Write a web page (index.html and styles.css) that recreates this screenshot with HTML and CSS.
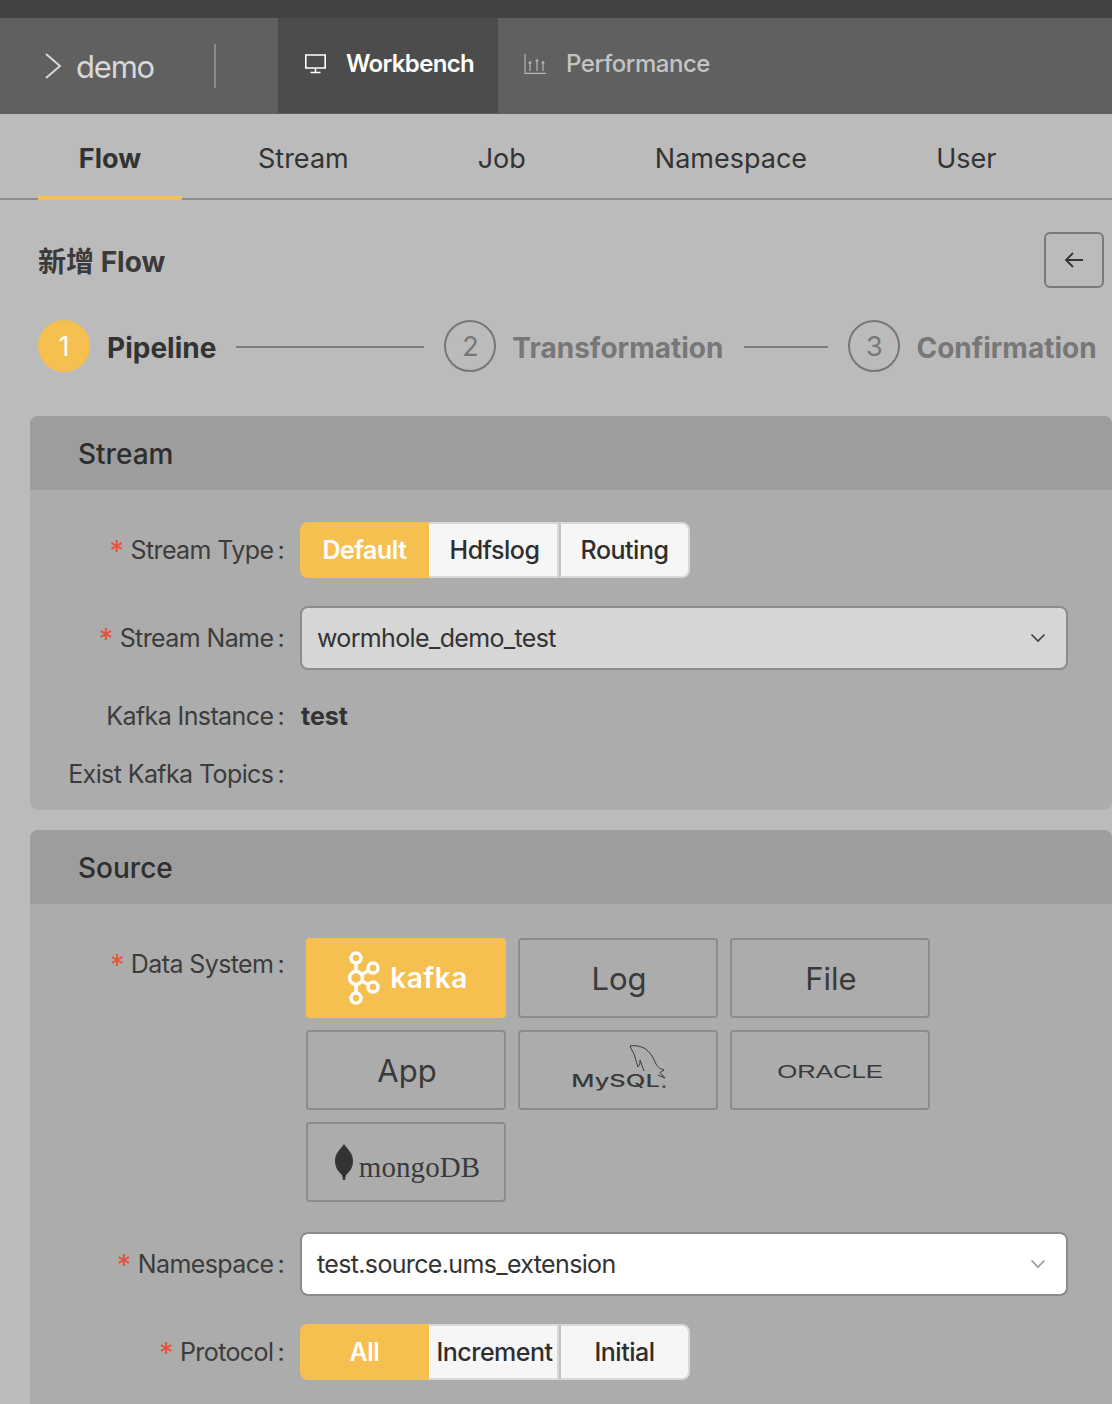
FILE: index.html
```html
<!DOCTYPE html>
<html lang="en">
<head>
  <meta charset="UTF-8" />
  <meta name="viewport" content="width=device-width, initial-scale=1.0" />
  <title>Wormhole</title>
  <link rel="stylesheet" href="styles.css">
</head>
<body>
  <header class="topbar">
    <div class="project">
      <svg class="project-arrow" width="18" height="26" viewBox="0 0 18 26"><path d="M2 1l14 12L2 25" fill="none" stroke="#d8d8d8" stroke-width="2"/></svg>
      <span class="project-name">demo</span>
    </div>
    <a class="nav-item nav-active">
      <svg width="23" height="20" viewBox="0 0 23 20"><path d="M1.800 1h19.400v13H1.800zM11.500 14v4M6.500 18.500h10" fill="none" stroke="#fff" stroke-width="1.600"/></svg>
      <span>Workbench</span>
    </a>
    <a class="nav-item">
      <svg width="23" height="20" viewBox="0 0 23 20"><path d="M1 0v19.300h21M6 17V8M4.700 9.500L6 7.500l1.300 2M13 17V6M11.700 7.500L13 5.500l1.300 2M19 17V8M17.700 9.500L19 7.500l1.300 2" fill="none" stroke="#b4b4b4" stroke-width="1.200"/></svg>
      <span>Performance</span>
    </a>
  </header>

  <nav class="tabs">
    <a class="tab tab-active">Flow</a>
    <a class="tab">Stream</a>
    <a class="tab">Job</a>
    <a class="tab">Namespace</a>
    <a class="tab">User</a>
  </nav>

  <div class="title-row">
    <h2>新增 Flow</h2>
    <button class="back-btn">
      <svg width="20" height="16" viewBox="0 0 20 16"><path d="M9 1L2 8l7 7M2 8h17" fill="none" stroke="#333" stroke-width="1.800"/></svg>
    </button>
  </div>

  <div class="steps">
    <div class="step step-active"><span class="step-num">1</span><span class="step-name">Pipeline</span></div>
    <div class="step-line step-line-long"></div>
    <div class="step"><span class="step-num">2</span><span class="step-name">Transformation</span></div>
    <div class="step-line"></div>
    <div class="step"><span class="step-num">3</span><span class="step-name">Confirmation</span></div>
  </div>

  <section class="panel">
    <h3 class="panel-head">Stream</h3>
    <div class="panel-body">
      <div class="row">
        <label class="req">Stream Type</label>
        <div class="radio-group">
          <span class="radio radio-on">Default</span>
          <span class="radio">Hdfslog</span>
          <span class="radio">Routing</span>
        </div>
      </div>
      <div class="row row-tight">
        <label class="req">Stream Name</label>
        <div class="select select-disabled">
          <span>wormhole_demo_test</span>
          <svg width="16" height="10" viewBox="0 0 16 10"><path d="M1.500 1.500L8 8l6.500-6.500" fill="none" stroke="#444" stroke-width="1.700"/></svg>
        </div>
      </div>
      <div class="row-text">
        <label>Kafka Instance</label>
        <strong>test</strong>
      </div>
      <div class="row-text">
        <label>Exist Kafka Topics</label>
      </div>
    </div>
  </section>

  <section class="panel panel-source">
    <h3 class="panel-head">Source</h3>
    <div class="panel-body">
      <div class="row row-systems">
        <label class="req">Data System</label>
        <div class="systems">
          <div class="system system-on">
            <svg width="36" height="56" viewBox="0 0 36 56">
              <path d="M12 8v40M12 28L29 18M12 28l17 9" fill="none" stroke="#fff" stroke-width="3.500"/>
              <circle cx="12" cy="8" r="5" fill="#f5c04f" stroke="#fff" stroke-width="3.500"/>
              <circle cx="12" cy="28" r="6.500" fill="#f5c04f" stroke="#fff" stroke-width="3.500"/>
              <circle cx="12" cy="48" r="5" fill="#f5c04f" stroke="#fff" stroke-width="3.500"/>
              <circle cx="29" cy="18" r="5" fill="#f5c04f" stroke="#fff" stroke-width="3.500"/>
              <circle cx="29" cy="37" r="5" fill="#f5c04f" stroke="#fff" stroke-width="3.500"/>
            </svg>
            <span class="logo-kafka">kafka</span>
          </div>
          <div class="system system-word">Log</div>
          <div class="system system-word">File</div>
          <div class="system system-word">App</div>
          <div class="system system-mysql">
            <span class="logo-mysql">MySQL</span>
            <svg class="dolphin" width="38" height="46" viewBox="0 0 38 46"><path d="M2 3C6 2 12 3 16 5c6 4 9 9 12 16 2 4 5 5 8 6l-4 2.500 5 5.500-7-3M2 3c1 4 4 6 5 11 1 4 2 7 3 10 2-2 2-5 2-7 1 4 3 7 4 11" fill="none" stroke="#3a3a3a" stroke-width="1"/><circle cx="36" cy="43.700" r="1.600" fill="#555"/></svg>
          </div>
          <div class="system"><span class="logo-oracle">ORACLE</span></div>
          <div class="system">
            <svg class="leaf" width="20" height="36" viewBox="0 0 20 36"><path d="M10 0c2 4 9 8 9 17 0 8-5 12-7 14l-1 5H9l-1-5C6 29 1 25 1 17 1 8 8 4 10 0z" fill="#333"/></svg>
            <span class="logo-mongo">mongoDB</span>
          </div>
        </div>
      </div>
      <div class="row">
        <label class="req">Namespace</label>
        <div class="select">
          <span>test.source.ums_extension</span>
          <svg width="16" height="10" viewBox="0 0 16 10"><path d="M1.500 1.500L8 8l6.500-6.500" fill="none" stroke="#999" stroke-width="1.700"/></svg>
        </div>
      </div>
      <div class="row">
        <label class="req">Protocol</label>
        <div class="radio-group">
          <span class="radio radio-on">All</span>
          <span class="radio">Increment</span>
          <span class="radio">Initial</span>
        </div>
      </div>
    </div>
  </section>
</body>
</html>
```

FILE: styles.css
```css
html, body {
  height: 1404px;
  overflow: hidden;
}
body {
  margin: 0;
  font-family: Inter, "Noto Sans CJK SC", sans-serif;
  background-color: #bbbbbb;
  color: #333;
}

/* top bar */
.topbar {
  display: flex;
  height: 95px;
  border-top: 18px solid #434343;
  border-bottom: 1px solid #5f5f5f;
  background-color: #606060;
}
.project {
  flex: none;
  display: flex;
  align-items: center;
  width: 172px;
  height: 44px;
  box-sizing: border-box;
  margin: 26px 62px 0 44px;
  border-right: 2px solid #8c8c8c;
}
.project-arrow {
  flex: none;
  margin-right: 14px;
}
.project-name {
  font-size: 31px;
  letter-spacing: -1.200px;
  color: #d8d8d8;
}
.nav-item {
  display: flex;
  align-items: center;
  gap: 19px;
  height: 95px;
  padding: 0 26px 4px;
  box-sizing: border-box;
  font-size: 24px;
  font-weight: 500;
  letter-spacing: -0.450px;
  color: #c4c4c4;
}
.nav-item svg {
  flex: none;
}
.nav-active {
  width: 220px;
  background-color: #4c4c4c;
  color: #fff;
  font-weight: 600;
  letter-spacing: -0.650px;
}

/* tabs */
.tabs {
  display: flex;
  height: 86px;
  padding-left: 38px;
  border-bottom: 2px solid #8d8d8d;
  box-sizing: border-box;
}
.tab {
  display: flex;
  align-items: center;
  justify-content: center;
  height: 86px;
  box-sizing: border-box;
  padding: 2px 40px 0;
  margin-right: 49px;
  font-size: 27px;
  color: #333;
}
.tab-active {
  width: 144px;
  margin-right: 36px;
  padding: 6px 0 0;
  font-weight: 700;
  border-bottom: 4px solid #f5c04f;
}

/* title */
.title-row {
  display: flex;
  align-items: center;
  justify-content: space-between;
  padding: 32px 8px 0 38px;
}
.title-row h2 {
  margin: 0;
  font-size: 28px;
  font-weight: 700;
  color: #3a3a3a;
}
.back-btn {
  display: flex;
  align-items: center;
  justify-content: center;
  width: 60px;
  height: 56px;
  padding: 0;
  border: 2px solid #7a7a7a;
  border-radius: 6px;
  background: none;
}

/* steps */
.steps {
  display: flex;
  align-items: center;
  padding: 32px 0 0 38px;
}
.step {
  display: flex;
  align-items: center;
  gap: 16px;
  font-size: 28px;
  font-weight: 700;
  color: #777;
}
.step-name {
  padding: 3px 1px 0 0;
}
.step-num {
  display: flex;
  align-items: center;
  justify-content: center;
  width: 52px;
  height: 52px;
  box-sizing: border-box;
  border: 2px solid #777;
  border-radius: 50%;
  font-weight: 400;
  font-size: 27px;
}
.step-active {
  gap: 17px;
  color: #333;
}
.step-active .step-name {
  padding-right: 0;
}
.step-active .step-num {
  border: none;
  background-color: #f5c04f;
  color: #fff;
}
.step-line {
  width: 84px;
  height: 2px;
  margin: 2px 20px 0;
  background-color: #7d7d7d;
}
.step-line-long {
  width: 188px;
}

/* panels */
.panel {
  margin: 44px 0 0 30px;
  border-radius: 8px;
  background-color: #acacac;
  height: 394px;
}
.panel-source {
  margin-top: 20px;
  height: 600px;
}
.panel-source .panel-body {
  padding-top: 34px;
}
.panel-head {
  margin: 0;
  height: 74px;
  padding-left: 48px;
  line-height: 76px;
  font-size: 28px;
  font-weight: 500;
  border-radius: 8px 8px 0 0;
  background-color: #9d9d9d;
  color: #2e2e2e;
}
.panel-body {
  padding-top: 32px;
}

/* form rows */
.row {
  display: flex;
  margin-bottom: 28px;
}
.row-tight {
  margin-bottom: 17px;
}
.row-systems {
  margin-bottom: 30px;
}
.row label, .row-text label {
  flex: none;
  display: flex;
  justify-content: flex-end;
  align-items: center;
  width: 255px;
  box-sizing: border-box;
  padding-right: 1px;
  margin-right: 16px;
  font-size: 25px;
  letter-spacing: -0.600px;
  color: #3c3c3c;
}
.row label::after, .row-text label::after {
  content: ":";
  margin-left: 4px;
}
.req::before {
  content: "*";
  margin-right: 7px;
  color: #e5533f;
  font-size: 29px;
  line-height: 1;
}
.row-systems label {
  height: 52px;
}
.row-text {
  display: flex;
  align-items: center;
  height: 58px;
}
.row-text strong {
  font-size: 25px;
  font-weight: 700;
  color: #333;
}

.radio-group {
  display: flex;
  height: 56px;
  margin-left: -1px;
}
.radio {
  display: flex;
  align-items: center;
  justify-content: center;
  width: 130px;
  box-sizing: border-box;
  padding-left: 3px;
  background-color: #f6f6f6;
  border: 2px solid #d8d8d8;
  border-left: 0;
  font-size: 25px;
  font-weight: 500;
  letter-spacing: -0.500px;
  color: #2e2e2e;
}
.radio:last-child {
  width: 131px;
  padding-left: 0;
  border-left: 2px solid #c4c4c4;
  border-radius: 0 8px 8px 0;
}
.radio-on {
  width: 129px;
  padding-left: 0;
  border: none;
  border-radius: 8px 0 0 8px;
  background-color: #f5c04f;
  color: #fff;
  font-weight: 600;
}

.select {
  display: flex;
  align-items: center;
  justify-content: space-between;
  width: 768px;
  height: 64px;
  box-sizing: border-box;
  margin-left: -1px;
  padding: 0 20px 0 15px;
  border: 2px solid #8c8c8c;
  border-radius: 8px;
  background-color: #fff;
  font-size: 25px;
  letter-spacing: -0.650px;
  color: #333;
}
.select-disabled {
  background-color: #d6d6d6;
}

/* data system cards */
.systems {
  display: grid;
  grid-template-columns: repeat(3, 200px);
  grid-auto-rows: 80px;
  gap: 12px;
  margin-left: 5px;
}
.system {
  display: flex;
  align-items: center;
  justify-content: center;
  box-sizing: border-box;
  border: 2px solid #8c8c8c;
  border-radius: 4px;
  font-size: 31px;
  color: #3a3a3a;
}
.system-word {
  padding-left: 2px;
}
.system-on {
  border-color: #f5c04f;
  background-color: #f5c04f;
}
.system-mysql {
  position: relative;
}
.logo-kafka {
  margin-left: 10px;
  font-size: 28px;
  font-weight: 600;
  letter-spacing: 0.500px;
  color: #fff;
}
.logo-mysql {
  margin: 22px 5px 0 0;
  font-size: 17px;
  font-weight: 500;
  transform: scaleX(1.5);
  color: #3a3a3a;
}
.dolphin {
  position: absolute;
  top: 11px;
  left: 108px;
}
.logo-oracle {
  margin-top: 3px;
  font-family: "Liberation Sans", sans-serif;
  font-size: 18.500px;
  transform: scaleX(1.39);
}
.leaf {
  flex: none;
  margin-left: 2px;
}
.logo-mongo {
  margin: 10px 0 0 5px;
  font-family: "Liberation Serif", serif;
  font-size: 29px;
  letter-spacing: 0.100px;
}
```
